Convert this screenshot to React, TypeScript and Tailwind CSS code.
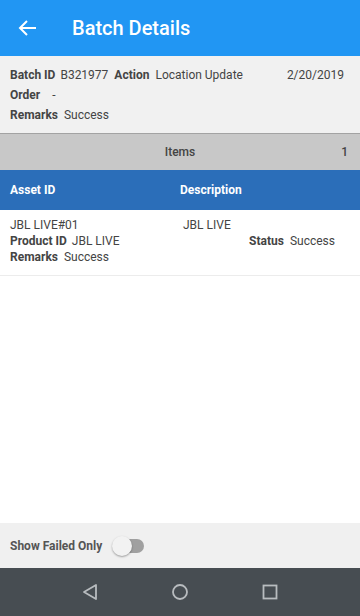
import React, { useState } from "react";

function BackArrow() {
  return (
    <svg width="24" height="24" viewBox="0 0 24 24" fill="none">
      <path d="M20 12H5M11 5l-7 7 7 7" stroke="white" strokeWidth="2" />
    </svg>
  );
}

function App() {
  const [failedOnly, setFailedOnly] = useState(false);

  return (
    <div
      className="w-[360px] h-[616px] flex flex-col bg-white text-[12px] text-[#444]"
      style={{ fontFamily: "Roboto, 'Noto Sans', sans-serif" }}
    >
      {/* toolbar */}
      <div className="h-[56px] bg-[#2196f3] flex items-center shrink-0">
        <div className="w-[72px] pl-[16px] flex items-center">
          <BackArrow />
        </div>
        <div className="text-white text-[20px] font-medium">Batch Details</div>
      </div>

      {/* batch info */}
      <div className="h-[78px] bg-[#f1f1f1] border-b border-[#a3a3a3] px-[10px] pt-[11px] flex flex-col gap-[4px] shrink-0">
        <div className="flex h-[16px] items-center">
          <span className="font-bold mr-[5px]">Batch ID</span>
          <span className="mr-[6px]">B321977</span>
          <span className="font-bold mr-[6px]">Action</span>
          <span>Location Update</span>
          <span className="ml-auto mr-[6px]">2/20/2019</span>
        </div>
        <div className="flex h-[16px] items-center">
          <span className="font-bold mr-[12px]">Order</span>
          <span>-</span>
        </div>
        <div className="flex h-[16px] items-center">
          <span className="font-bold mr-[6px]">Remarks</span>
          <span>Success</span>
        </div>
      </div>

      {/* items bar */}
      <div className="h-[36px] bg-[#c8c8c8] flex items-center relative shrink-0">
        <span className="flex-1 text-center font-medium">Items</span>
        <span className="absolute right-[12px] font-medium">1</span>
      </div>

      {/* table header */}
      <div className="h-[40px] bg-[#2b6eb9] flex items-center text-white font-bold shrink-0">
        <span className="w-[180px] pl-[10px]">Asset ID</span>
        <span>Description</span>
      </div>

      {/* rows */}
      <div className="flex-1">
        <div className="h-[66px] border-b border-[#ececec] px-[10px] pt-[7px] flex flex-col">
          <div className="flex h-[16px] items-center">
            <span className="w-[173px]">JBL LIVE#01</span>
            <span>JBL LIVE</span>
          </div>
          <div className="flex h-[16px] items-center">
            <span className="font-bold mr-[5px]">Product ID</span>
            <span>JBL LIVE</span>
            <span className="ml-auto font-bold mr-[6px]">Status</span>
            <span className="mr-[15px]">Success</span>
          </div>
          <div className="flex h-[16px] items-center">
            <span className="font-bold mr-[6px]">Remarks</span>
            <span>Success</span>
          </div>
        </div>
      </div>

      {/* filter bar */}
      <div className="h-[45px] bg-[#f0f0f0] flex items-center px-[10px] shrink-0">
        <span className="font-bold text-[#555] mr-[10px]">Show Failed Only</span>
        <button
          onClick={() => setFailedOnly(!failedOnly)}
          className="relative w-[34px] h-[20px] flex items-center"
        >
          <span className="absolute left-[6px] w-[26px] h-[14px] rounded-full bg-[#a0a0a0]" />
          <span className="absolute left-0 w-[20px] h-[20px] rounded-full bg-[#f2f2f2] shadow-[0_1px_2px_rgba(0,0,0,0.35)]" />
        </button>
      </div>

      {/* nav bar */}
      <div className="h-[48px] bg-[#474d52] flex items-center justify-around px-[45px] shrink-0">
        <svg width="20" height="20" viewBox="0 0 20 20" fill="none">
          <path d="M16 3v14L4 10z" stroke="#b8bcbf" strokeWidth="1.8" strokeLinejoin="round" />
        </svg>
        <svg width="20" height="20" viewBox="0 0 20 20" fill="none">
          <circle cx="10" cy="10" r="7" stroke="#b8bcbf" strokeWidth="1.8" />
        </svg>
        <svg width="20" height="20" viewBox="0 0 20 20" fill="none">
          <rect x="3.5" y="3.5" width="13" height="13" stroke="#b8bcbf" strokeWidth="1.8" />
        </svg>
      </div>
    </div>
  );
}

export default App;
